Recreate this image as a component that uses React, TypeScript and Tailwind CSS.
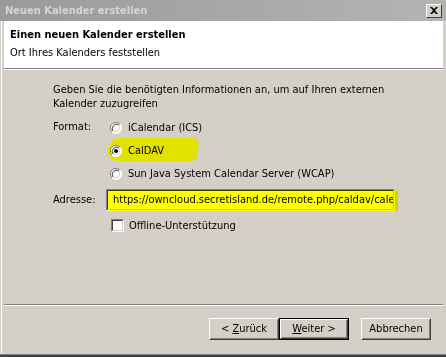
import React from "react";

const font = { fontFamily: "'DejaVu Sans Condensed', 'Liberation Sans', sans-serif" };

function Radio({ checked }: { checked?: boolean }) {
  return (
    <svg width="12" height="12" viewBox="0 0 12 12" className="shrink-0 relative">
      <circle cx="6" cy="6" r="5.5" fill="#ffffff" />
      <path d="M10 2 A5.5 5.5 0 0 0 2 10" stroke="#808080" strokeWidth="1" fill="none" />
      <path d="M9 3 A4.3 4.3 0 0 0 3 9" stroke="#404040" strokeWidth="1" fill="none" />
      <path d="M2 10 A5.5 5.5 0 0 0 10 2" stroke="#ffffff" strokeWidth="1" fill="none" />
      <path d="M3 9 A4.3 4.3 0 0 0 9 3" stroke="#d4d0c8" strokeWidth="1" fill="none" />
      {checked && <circle cx="6" cy="6" r="2" fill="#000000" />}
    </svg>
  );
}

function Checkbox() {
  return (
    <div className="w-[13px] h-[13px] shrink-0 border border-t-[#808080] border-l-[#808080] border-b-white border-r-white">
      <div className="w-full h-full bg-white border border-t-[#404040] border-l-[#404040] border-b-[#d4d0c8] border-r-[#d4d0c8]" />
    </div>
  );
}

function Button({ children, isDefault }: { children: React.ReactNode; isDefault?: boolean }) {
  const inner = (
    <div className="h-full w-full border border-t-white border-l-white border-b-[#404040] border-r-[#404040]">
      <div className="h-full w-full flex items-center justify-center border border-t-[#d4d0c8] border-l-[#d4d0c8] border-b-[#808080] border-r-[#808080] text-[11px] text-black">
        {children}
      </div>
    </div>
  );
  if (isDefault) {
    return <div className="w-[70px] h-[22px] border border-black bg-[#d4d0c8]">{inner}</div>;
  }
  return <div className="w-[70px] h-[22px] bg-[#d4d0c8]">{inner}</div>;
}

export default function App() {
  return (
    <div style={font} className="w-[446px] h-[357px] bg-[#d4d0c8] flex flex-col overflow-hidden text-[11px] text-black">
      {/* Title bar */}
      <div className="h-[21px] shrink-0 flex items-center justify-between pl-[5px] pr-[4px] bg-gradient-to-r from-[#9a9a9a] to-[#b4b4b4]">
        <span className="font-bold text-[11px] text-[#d8d5ce] leading-none">Neuen Kalender erstellen</span>
        <div className="w-[16px] h-[14px] bg-[#d4d0c8] border border-t-white border-l-white border-b-[#404040] border-r-[#404040] flex items-center justify-center">
          <svg width="8" height="7" viewBox="0 0 8 7">
            <path d="M0 0 L2 0 L4 2 L6 0 L8 0 L5 3.5 L8 7 L6 7 L4 5 L2 7 L0 7 L3 3.5 Z" fill="#000" />
          </svg>
        </div>
      </div>

      <div className="flex-1 flex flex-col ml-[1px] border-l border-white">
        {/* Header */}
        <div className="ml-[2px] mr-[3px] h-[49px] shrink-0 flex flex-col">
          <div className="flex-1 bg-white pl-[6px] pt-[7px] leading-[14px]">
            <div className="font-bold">Einen neuen Kalender erstellen</div>
            <div className="mt-[4px]">Ort Ihres Kalenders feststellen</div>
          </div>
          <div className="h-[1px] bg-[#808080]" />
          <div className="h-[1px] bg-white" />
        </div>

        {/* Body */}
        <div className="flex-1 flex flex-col pl-[51px] pt-[13px] leading-[14px]">
          <div>Geben Sie die benötigten Informationen an, um auf Ihren externen</div>
          <div>Kalender zuzugreifen</div>

          <div className="mt-[5px] flex">
            <div className="w-[57px] pt-[4px]">Format:</div>
            <div className="flex flex-col">
              <div className="h-[23px] flex items-center gap-[6px]">
                <Radio />
                <span>iCalendar (ICS)</span>
              </div>
              <div className="h-[23px] flex items-center gap-[6px] relative">
                <div className="absolute left-[-2px] top-[-1px] w-[90px] h-[23px] bg-[#e2e200] rounded-r-[6px] rounded-l-[10px] -skew-x-6" />
                <Radio checked />
                <span className="relative">CalDAV</span>
              </div>
              <div className="h-[23px] flex items-center gap-[6px]">
                <Radio />
                <span>Sun Java System Calendar Server (WCAP)</span>
              </div>
            </div>
          </div>

          <div className="mt-[4px] flex items-center">
            <div className="w-[53px]">Adresse:</div>
            <div className="relative">
              <div className="w-[289px] h-[22px] border border-t-[#808080] border-l-[#808080] border-b-white border-r-white">
                <div className="w-full h-full bg-white border border-t-[#404040] border-l-[#404040] border-b-[#d4d0c8] border-r-[#d4d0c8] overflow-hidden whitespace-nowrap pl-[5px] flex items-center">
                  https://owncloud.secretisland.de/remote.php/caldav/calendars/
                </div>
              </div>
              <div className="absolute left-[2px] top-[1px] w-[290px] h-[21px] bg-[#ffff00] mix-blend-multiply rounded-[3px]" />
            </div>
          </div>

          <div className="mt-[3px] h-[23px] flex items-center gap-[5px] pl-[58px]">
            <Checkbox />
            <span>Offline-Unterstützung</span>
          </div>
        </div>

        {/* Separator */}
        <div className="ml-[2px] mr-[3px] shrink-0">
          <div className="h-[1px] bg-[#808080]" />
          <div className="h-[1px] bg-white" />
        </div>

        {/* Footer */}
        <div className="h-[48px] shrink-0 flex items-start justify-end pt-[12px] pr-[15px]">
          <div className="flex">
            <Button>
              <span>&lt; <span className="underline">Z</span>urück</span>
            </Button>
            <Button isDefault>
              <span><span className="underline">W</span>eiter &gt;</span>
            </Button>
            <div className="w-[12px]" />
            <Button>Abbrechen</Button>
          </div>
        </div>
      </div>
      <div className="h-[1px] bg-[#808080] shrink-0" />
      <div className="h-[2px] bg-[#404040] shrink-0" />
    </div>
  );
}
